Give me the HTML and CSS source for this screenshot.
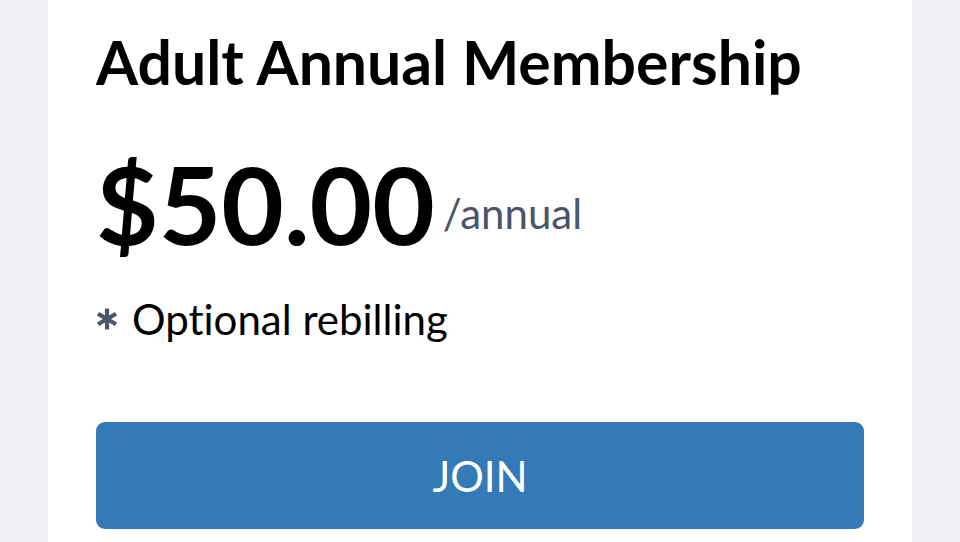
FILE: index.html
```html
<!DOCTYPE html>
<html>
<head>
<meta charset="utf-8">
<link rel="stylesheet" href="styles.css">
</head>
<body>
<div class="page">
  <div class="card">
    <h1 class="title">Adult Annual Membership</h1>
    <div class="price-row">
      <span class="price">$50.00</span>
      <span class="period">/annual</span>
    </div>
    <div class="note">
      <svg class="star" viewBox="0 0 20 20" width="22" height="22"><g stroke="#4a5568" stroke-width="3.8" stroke-linecap="butt"><line x1="10" y1="0.5" x2="10" y2="19.5"/><line x1="1.8" y1="5.2" x2="18.2" y2="14.8"/><line x1="1.8" y1="14.8" x2="18.2" y2="5.2"/></g></svg>
      <span>Optional rebilling</span>
    </div>
    <button class="join">JOIN</button>
  </div>
</div>
</body>
</html>
```
FILE: styles.css
```css
html, body {
  margin: 0;
  padding: 0;
  height: 100%;
}
body {
  background: #efeff4;
  font-family: Lato, "Open Sans", sans-serif;
  font-variant-ligatures: no-common-ligatures;
  overflow: hidden;
}
.page {
  padding: 0 48px;
  height: 100%;
}
.card {
  background: #ffffff;
  height: 100%;
  padding: 0 48px;
  box-sizing: border-box;
  display: flex;
  flex-direction: column;
}
.title {
  margin: 26px 0 0;
  font-size: 60.7px;
  font-weight: 700;
  line-height: 72px;
  color: #000;
}
.price-row {
  display: flex;
  align-items: flex-end;
  margin-top: 45px;
}
.price {
  font-size: 108px;
  font-weight: 700;
  line-height: 120px;
  color: #000;
}
.period {
  font-size: 42px;
  line-height: 50px;
  color: #4a5568;
  margin-left: 8px;
  padding-bottom: 25px;
}
.note {
  display: flex;
  align-items: center;
  gap: 14px;
  margin-top: 31px;
  font-size: 42px;
  line-height: 50px;
  color: #000;
}
.join {
  margin-top: 78px;
  height: 107px;
  border: none;
  border-radius: 9px;
  background: #337ab7;
  color: #fff;
  font-family: Lato, sans-serif;
  font-variant-ligatures: no-common-ligatures;
  font-size: 42px;
}
```
